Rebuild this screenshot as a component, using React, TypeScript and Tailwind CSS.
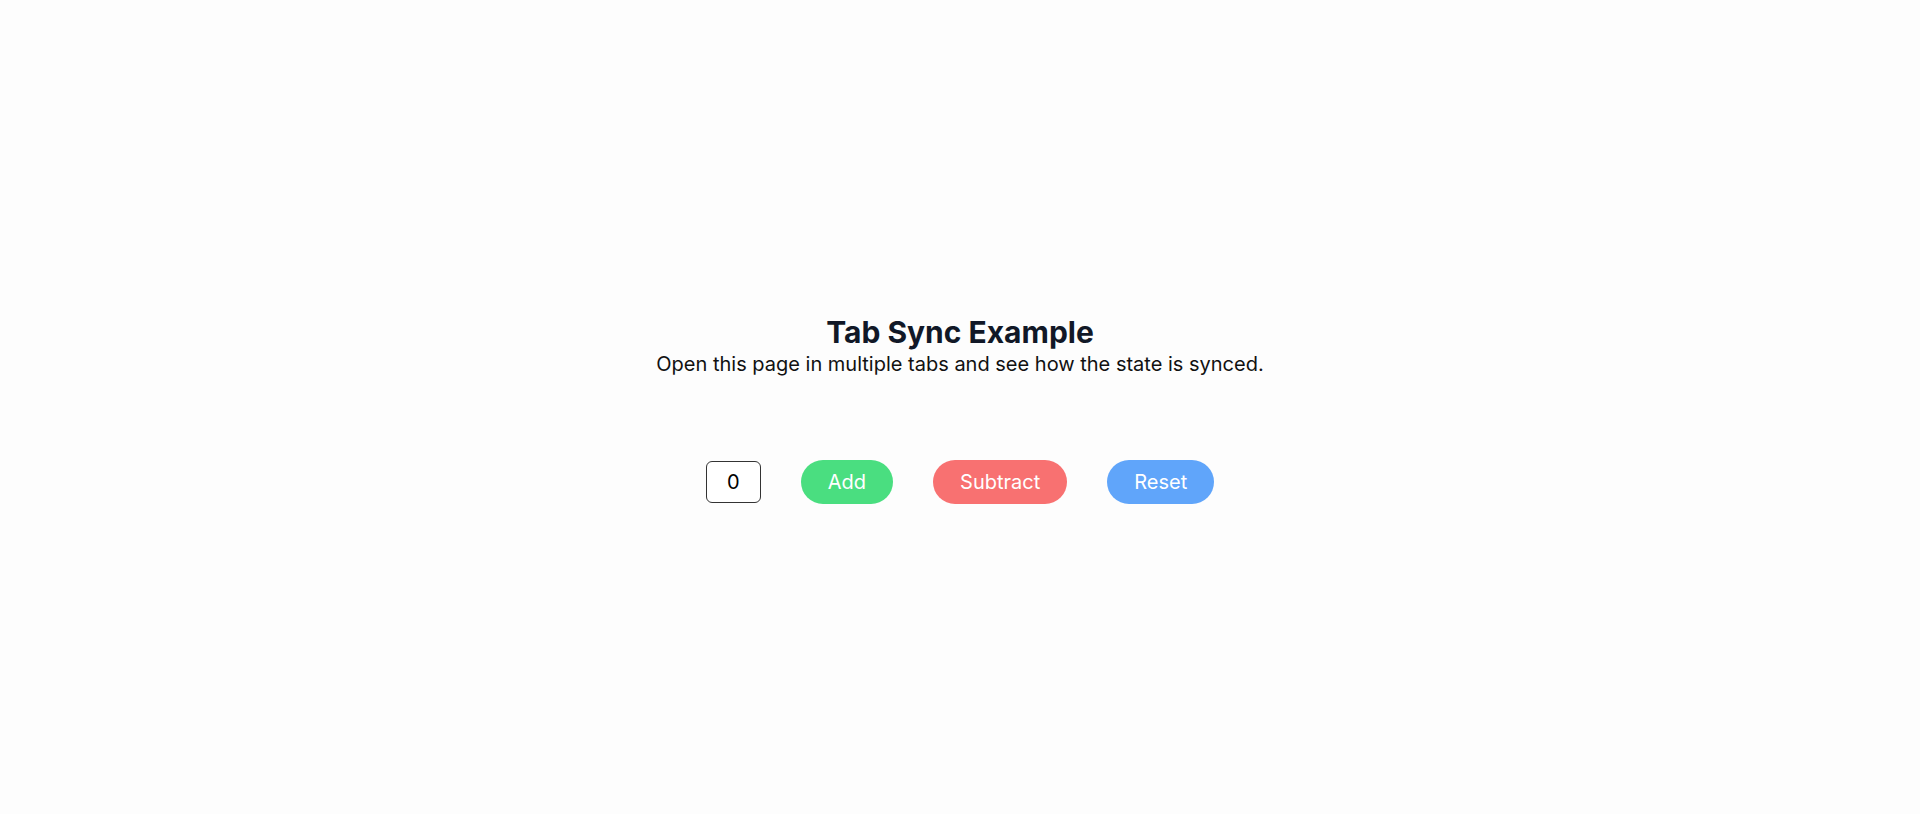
import React, { useState } from "react";

export default function App() {
  const [count, setCount] = useState(0);
  return (
    <div
      className="min-h-screen w-full flex flex-col items-center justify-center bg-[#fdfdfd] pt-[3px]"
      style={{ fontFamily: "Inter, 'Noto Sans', sans-serif" }}
    >
      <h1 className="text-3xl font-bold text-[#111827] leading-9">Tab Sync Example</h1>
      <p className="text-xl text-[#111111] leading-7">
        Open this page in multiple tabs and see how the state is synced.
      </p>
      <div className="mt-[82px] flex items-center gap-10">
        <input
          readOnly
          value={count}
          className="w-[55px] h-[42px] border border-[#333] rounded-md text-center text-xl text-black bg-white outline-none"
        />
        <button
          onClick={() => setCount(count + 1)}
          className="px-[27px] py-2 rounded-full bg-[#4ade80] text-white text-xl leading-7"
        >
          Add
        </button>
        <button
          onClick={() => setCount(count - 1)}
          className="px-[27px] py-2 rounded-full bg-[#f87171] text-white text-xl leading-7"
        >
          Subtract
        </button>
        <button
          onClick={() => setCount(0)}
          className="px-[27px] py-2 rounded-full bg-[#60a5fa] text-white text-xl leading-7"
        >
          Reset
        </button>
      </div>
    </div>
  );
}
